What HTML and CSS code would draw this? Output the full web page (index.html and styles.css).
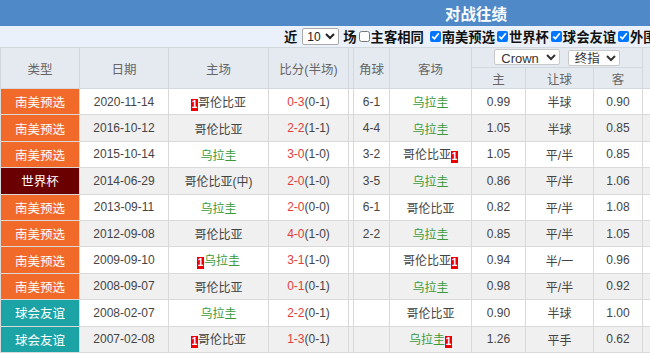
FILE: index.html
```html
<!DOCTYPE html>
<html lang="zh">
<head>
<meta charset="utf-8">
<link rel="stylesheet" href="styles.css">
</head>
<body>
<div class="wrap">
  <div class="title">对战往绩</div>
  <div class="filter">
    <span class="lbl">近</span>
    <select class="sel-num"><option>10</option></select>
    <span class="lbl">场</span>
    <label class="chk"><input type="checkbox">主客相同</label>
    <label class="chk gap"><input type="checkbox" checked>南美预选</label>
    <label class="chk"><input type="checkbox" checked>世界杯</label>
    <label class="chk"><input type="checkbox" checked>球会友谊</label>
    <label class="chk"><input type="checkbox" checked>外围赛</label>
    <label class="chk"><input type="checkbox" checked>其他赛事</label>
  </div>
  <table class="tbl">
    <colgroup>
      <col class="c-type"><col class="c-date"><col class="c-home"><col class="c-score"><col class="c-gap"><col class="c-corner"><col class="c-away"><col class="c-h"><col class="c-hc"><col class="c-a"><col class="c-rest">
    </colgroup>
    <thead>
      <tr class="h1">
        <th rowspan="2">类型</th>
        <th rowspan="2">日期</th>
        <th rowspan="2">主场</th>
        <th rowspan="2">比分(半场)</th>
        <th rowspan="2"></th>
        <th rowspan="2">角球</th>
        <th rowspan="2">客场</th>
        <th colspan="3" class="odds-sel">
          <select class="sel-co"><option>Crown</option></select>
          <select class="sel-ty"><option>终指</option></select>
        </th>
        <th rowspan="2"></th>
      </tr>
      <tr class="h2">
        <th>主</th><th>让球</th><th>客</th>
      </tr>
    </thead>
    <tbody>
      <tr>
        <td class="t-sa">南美预选</td><td>2020-11-14</td>
        <td><span class="rc">1</span>哥伦比亚</td>
        <td><span class="sc">0-3</span>(0-1)</td><td></td><td>6-1</td>
        <td class="g">乌拉圭</td><td>0.99</td><td>半球</td><td>0.90</td><td></td>
      </tr>
      <tr class="alt">
        <td class="t-sa">南美预选</td><td>2016-10-12</td>
        <td>哥伦比亚</td>
        <td><span class="sc">2-2</span>(1-1)</td><td></td><td>4-4</td>
        <td class="g">乌拉圭</td><td>1.05</td><td>半球</td><td>0.85</td><td></td>
      </tr>
      <tr>
        <td class="t-sa">南美预选</td><td>2015-10-14</td>
        <td class="g">乌拉圭</td>
        <td><span class="sc">3-0</span>(1-0)</td><td></td><td>3-2</td>
        <td>哥伦比亚<span class="rc">1</span></td><td>1.05</td><td>平/半</td><td>0.85</td><td></td>
      </tr>
      <tr class="alt">
        <td class="t-wc">世界杯</td><td>2014-06-29</td>
        <td>哥伦比亚(中)</td>
        <td><span class="sc">2-0</span>(1-0)</td><td></td><td>3-5</td>
        <td class="g">乌拉圭</td><td>0.86</td><td>平/半</td><td>1.06</td><td></td>
      </tr>
      <tr>
        <td class="t-sa">南美预选</td><td>2013-09-11</td>
        <td class="g">乌拉圭</td>
        <td><span class="sc">2-0</span>(0-0)</td><td></td><td>6-1</td>
        <td>哥伦比亚</td><td>0.82</td><td>平/半</td><td>1.08</td><td></td>
      </tr>
      <tr class="alt">
        <td class="t-sa">南美预选</td><td>2012-09-08</td>
        <td>哥伦比亚</td>
        <td><span class="sc">4-0</span>(1-0)</td><td></td><td>2-2</td>
        <td class="g">乌拉圭</td><td>0.85</td><td>平/半</td><td>1.05</td><td></td>
      </tr>
      <tr>
        <td class="t-sa">南美预选</td><td>2009-09-10</td>
        <td class="g"><span class="rc">1</span>乌拉圭</td>
        <td><span class="sc">3-1</span>(1-0)</td><td></td><td></td>
        <td>哥伦比亚<span class="rc">1</span></td><td>0.94</td><td>半/一</td><td>0.96</td><td></td>
      </tr>
      <tr class="alt">
        <td class="t-sa">南美预选</td><td>2008-09-07</td>
        <td>哥伦比亚</td>
        <td><span class="sc">0-1</span>(0-1)</td><td></td><td></td>
        <td class="g">乌拉圭</td><td>0.98</td><td>平/半</td><td>0.92</td><td></td>
      </tr>
      <tr>
        <td class="t-cf">球会友谊</td><td>2008-02-07</td>
        <td class="g">乌拉圭</td>
        <td><span class="sc">2-2</span>(0-1)</td><td></td><td></td>
        <td>哥伦比亚</td><td>0.90</td><td>半球</td><td>1.00</td><td></td>
      </tr>
      <tr class="alt">
        <td class="t-cf">球会友谊</td><td>2007-02-08</td>
        <td><span class="rc">1</span>哥伦比亚</td>
        <td><span class="sc">1-3</span>(0-1)</td><td></td><td></td>
        <td class="g">乌拉圭<span class="rc">1</span></td><td>1.26</td><td>平手</td><td>0.62</td><td></td>
      </tr>
    </tbody>
  </table>
</div>
</body>
</html>
```
FILE: styles.css
```css
html, body {
  margin: 0;
  padding: 0;
  background: #fff;
  overflow: hidden;
}
body {
  font-family: "Liberation Sans", "Noto Sans CJK SC", sans-serif;
}
.wrap {
  width: 952px;
}
.title {
  height: 26px;
  line-height: 26px;
  background: #5089c8;
  color: #fff;
  font-weight: bold;
  font-size: 15.5px;
  text-align: center;
  font-family: "Noto Sans CJK SC", sans-serif;
}
.filter {
  height: 21px;
  background: #eaf1fa;
  display: flex;
  align-items: center;
  padding-left: 284px;
  white-space: nowrap;
  font-family: "Noto Sans CJK SC", sans-serif;
  font-weight: bold;
  font-size: 13.3px;
  color: #111;
}
.lbl { line-height: 1; }
.sel-num {
  width: 37px;
  height: 17px;
  margin: 0 4px 0 5px;
  padding: 0;
  font-family: "Liberation Sans", sans-serif;
  font-size: 12px;
  font-weight: normal;
  border: 1px solid #aaa;
  border-radius: 2px;
  background: #fff;
  color: #222;
}
.chk {
  display: inline-flex;
  align-items: center;
  line-height: 1;
}
.chk input {
  width: 11px;
  height: 11px;
  margin: 0 1px 0 2px;
}
.chk.gap { margin-left: 4px; }
.tbl {
  table-layout: fixed;
  border-collapse: collapse;
  width: 952px;
  font-size: 12px;
  color: #444;
}
.c-type { width: 79px; }
.c-date { width: 89px; }
.c-home { width: 100px; }
.c-score { width: 80px; }
.c-gap { width: 5px; }
.c-corner { width: 36px; }
.c-away { width: 82px; }
.c-h { width: 54px; }
.c-hc { width: 68px; }
.c-a { width: 49px; }
.c-rest { width: 310px; }
.tbl th, .tbl td {
  border: 1px solid #d9d9d9;
  padding: 0;
  text-align: center;
  white-space: nowrap;
  overflow: hidden;
}
.tbl th {
  background: #e5eaf0;
  color: #666;
  font-weight: normal;
  font-size: 12.5px;
  border-color: #d3d8de;
}
.h1 { height: 20px; }
.h2 { height: 21px; }
.tbl th.odds-sel {
  vertical-align: middle;
  overflow: visible;
}
.sel-co, .sel-ty {
  height: 16px;
  padding: 0 0 0 2px;
  font-family: "Liberation Sans", "Noto Sans CJK SC", sans-serif;
  font-size: 13px;
  color: #333;
  border: 1px solid #c8c8c8;
  border-radius: 2px;
  background: #fff;
}
.sel-co { width: 66px; margin-right: 4px; }
.sel-ty { width: 52px; font-size: 12.5px; }
.tbl tbody tr { height: 26.4px; }
.tbl tbody tr.alt td { background: #f0f0f0; }
.tbl tbody tr td.t-sa { background: #f26a2a; color: #fff; font-size: 12.5px; }
.tbl tbody tr td.t-wc { background: #6a0000; color: #fff; font-size: 12.5px; }
.tbl tbody tr td.t-cf { background: #1ca3a5; color: #fff; font-size: 12.5px; }
.g { color: #3a9a3a; }
.sc { color: #e03c3c; }
.rc {
  display: inline-block;
  width: 7px;
  height: 12px;
  line-height: 12px;
  background: #e00;
  color: #fff;
  font-weight: bold;
  font-size: 10px;
  vertical-align: -1px;
  text-align: center;
}
```
